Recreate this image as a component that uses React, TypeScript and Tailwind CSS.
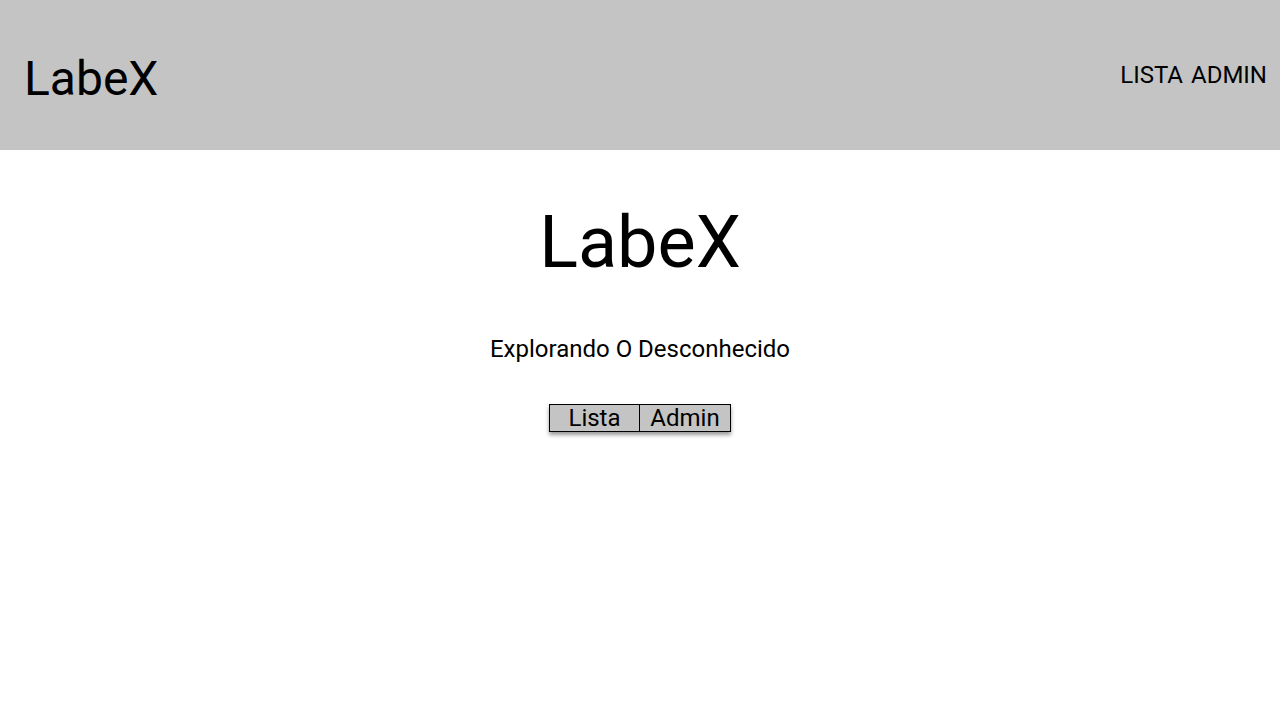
import React from 'react';

const Header: React.FC = () => {
    return (
        <header className="flex h-[150px] items-center justify-between bg-[#c4c4c4] pl-[24px] pr-[13px]">
            <h2 className="mt-[8px] text-[48px] leading-[56px]">LabeX</h2>
            <nav className="flex gap-[8px] text-[24px] leading-[28px]">
                <button>LISTA</button>
                <button>ADMIN</button>
            </nav>
        </header>
    );
};

const App: React.FC = () => {
    return (
        <div className="min-h-screen bg-white text-black" style={{ fontFamily: 'Roboto, sans-serif' }}>
            <Header />
            <main className="flex flex-col items-center">
                <h1 className="mt-[51px] text-[72px] leading-[84px]">LabeX</h1>
                <p className="mt-[50px] text-[24px] leading-[28px]">Explorando O Desconhecido</p>
                <div className="mt-[41px] flex shadow-[0_3px_4px_rgba(0,0,0,0.4)]">
                    <button className="h-[28px] w-[91px] border border-black bg-[#c4c4c4] text-[24px] leading-[26px]">Lista</button>
                    <button className="h-[28px] w-[91px] border border-l-0 border-black bg-[#c4c4c4] text-[24px] leading-[26px]">Admin</button>
                </div>
            </main>
        </div>
    );
};

export default App;
